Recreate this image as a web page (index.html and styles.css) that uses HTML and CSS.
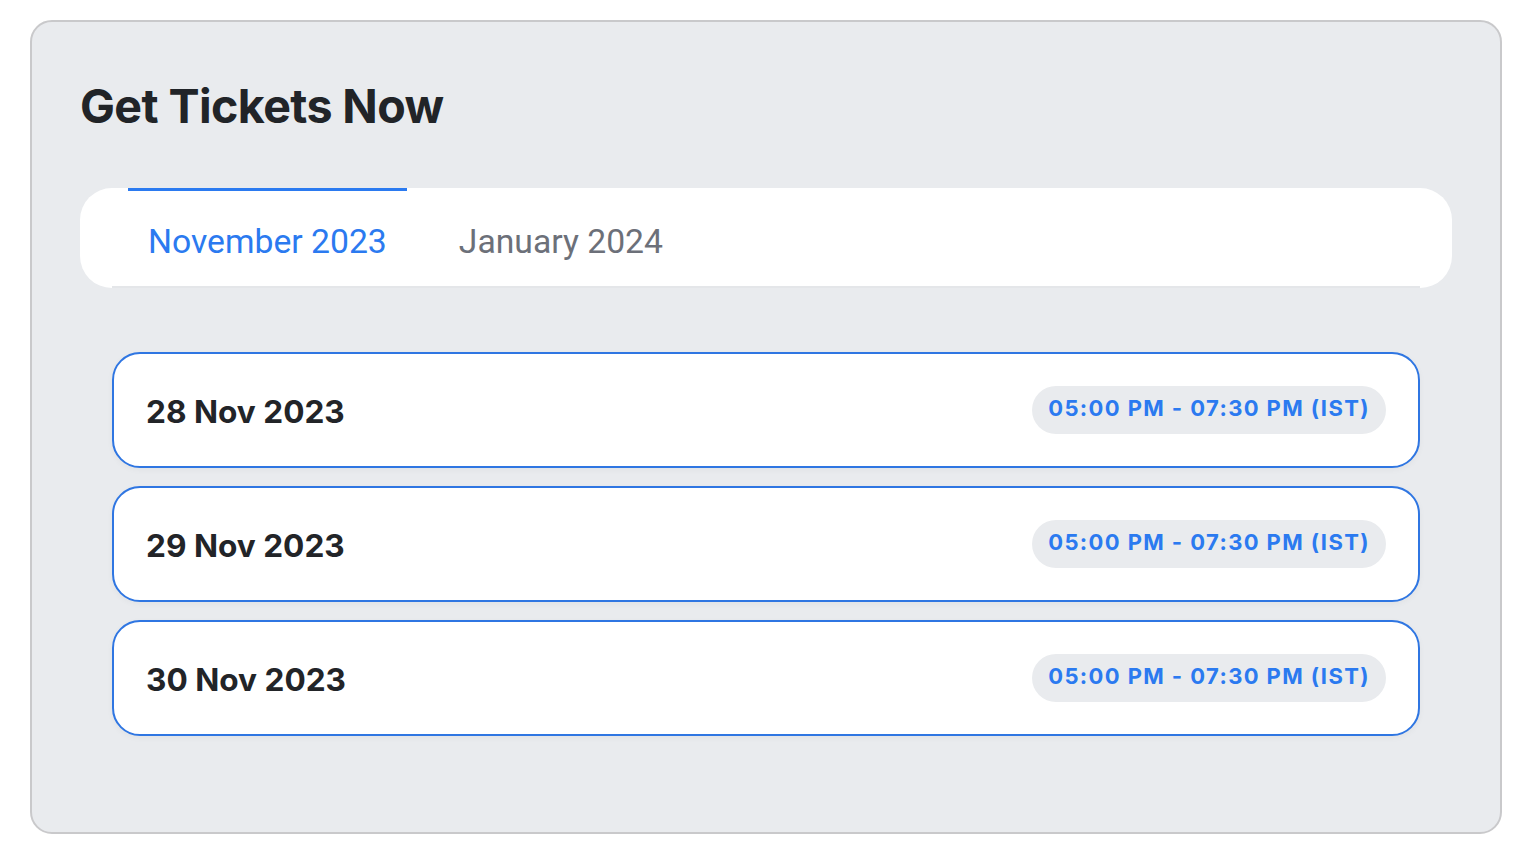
FILE: index.html
```html
<!DOCTYPE html>
<html lang="en">
<head>
<meta charset="utf-8">
<title>Get Tickets Now</title>
<link rel="stylesheet" href="styles.css">
</head>
<body>
<section class="tickets">
  <h2 class="tickets-title">Get Tickets Now</h2>
  <div class="tabs">
    <ul class="tab-list">
      <li class="tab tab-active">November 2023</li>
      <li class="tab">January 2024</li>
    </ul>
  </div>
  <div class="dates">
    <div class="date-card">
      <span class="date-label">28 Nov 2023</span>
      <span class="time-pill">05:00 PM - 07:30 PM (IST)</span>
    </div>
    <div class="date-card">
      <span class="date-label">29 Nov 2023</span>
      <span class="time-pill">05:00 PM - 07:30 PM (IST)</span>
    </div>
    <div class="date-card">
      <span class="date-label">30 Nov 2023</span>
      <span class="time-pill">05:00 PM - 07:30 PM (IST)</span>
    </div>
  </div>
</section>
</body>
</html>
```
FILE: styles.css
```css
* { box-sizing: border-box; }
html, body { margin: 0; padding: 0; background: #ffffff; }
body { font-family: Inter, "Noto Sans", sans-serif; }

.tickets {
  margin: 20px 30px 0 30px;
  width: 1472px;
  height: 814px;
  background: #e9ebee;
  border: 2px solid #c9c9cb;
  border-radius: 22px;
  padding: 58px 48px 0 48px;
}

.tickets-title {
  margin: 0;
  font-size: 46.6px;
  line-height: 52px;
  font-weight: 700;
  color: #212428;
  letter-spacing: -0.6px;
}

.tabs {
  margin-top: 56px;
  background: #ffffff;
  border-radius: 32px;
  height: 100px;
  padding: 0 32px;
}

.tab-list {
  list-style: none;
  margin: 0;
  padding: 0 0 0 16px;
  height: 100%;
  display: flex;
  border-bottom: 2px solid #e4e6e9;
}

.tab {
  font-family: Roboto, "Noto Sans", sans-serif;
  font-size: 33.7px;
  color: #6c7079;
  padding: 5px 20px 0 20px;
  display: flex;
  align-items: center;
  border-top: 3px solid transparent;
  margin-right: 32px;
}

.tab-active {
  color: #2b7af0;
  border-top-color: #2b7af0;
}

.dates {
  margin-top: 64px;
  padding: 0 32px;
  display: flex;
  flex-direction: column;
  gap: 18px;
}

.date-card {
  height: 116px;
  background: #ffffff;
  border: 2px solid #2f76e2;
  border-radius: 28px;
  display: flex;
  align-items: center;
  justify-content: space-between;
  padding: 2px 32px 0 32px;
  box-shadow: 0 2px 6px rgba(0,0,0,0.04);
}

.date-label {
  font-size: 31.6px;
  font-weight: 700;
  color: #222428;
}

.time-pill {
  background: #e9ebee;
  color: #2b7af0;
  font-size: 22px;
  font-weight: 700;
  letter-spacing: 1.4px;
  height: 48px;
  border-radius: 24px;
  padding: 0 16px 5px 16px;
  display: flex;
  align-items: center;
  margin-top: -2px;
}
```
